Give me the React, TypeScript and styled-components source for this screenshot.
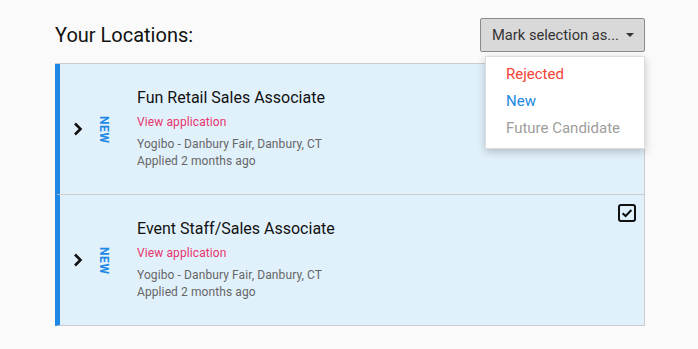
import * as React from 'react';
import styled, { createGlobalStyle } from 'styled-components';

const GlobalStyle = createGlobalStyle`
  body {
    margin: 0;
    background: #fafafa;
    font-family: Roboto, "Liberation Sans", Arial, sans-serif;
  }
`;

const Page = styled.div`
  width: 590px;
  padding: 18px 0 0 55px;
`;

const Header = styled.div`
  display: flex;
  justify-content: space-between;
  align-items: center;
  height: 34px;
  margin-bottom: 11px;
  position: relative;
`;

const Title = styled.h1`
  margin: 0;
  font-size: 20px;
  font-weight: 400;
  color: #111;
`;

const MarkButton = styled.button`
  display: flex;
  align-items: center;
  gap: 7px;
  height: 34px;
  padding: 0 10px 0 11px;
  background: #d9d9d9;
  border: 1px solid #8a8a8a;
  border-radius: 2px;
  font-family: inherit;
  font-size: 14.7px;
  color: #333;
`;

const Caret = styled.span`
  width: 0;
  height: 0;
  border-left: 4.5px solid transparent;
  border-right: 4.5px solid transparent;
  border-top: 4.5px solid #333;
`;

const Menu = styled.ul`
  position: absolute;
  top: 38px;
  right: 0;
  width: 158px;
  margin: 0;
  padding: 4px 0 6px;
  list-style: none;
  background: #fff;
  border: 1px solid #ddd;
  box-shadow: 0 3px 8px rgba(0, 0, 0, 0.22);
  z-index: 2;
`;

const MenuItem = styled.li<{ $color: string }>`
  height: 27px;
  line-height: 27px;
  padding-left: 20px;
  font-size: 15px;
  color: ${p => p.$color};
`;

const List = styled.div`
  border-top: 1px solid #ccc;
`;

const Card = styled.div`
  position: relative;
  display: flex;
  align-items: center;
  height: 130px;
  background: #e1f1fc;
  border-left: 5px solid #1e88e5;
  border-right: 1px solid #ccc;
  border-bottom: 1px solid #ccc;
`;

const Toggle = styled.div`
  display: flex;
  justify-content: center;
  width: 34px;
  margin-left: 1px;
`;

const Badge = styled.div`
  display: flex;
  justify-content: center;
  width: 16px;
  margin: 2px 26px 0 0;
  writing-mode: vertical-rl;
  font-size: 12px;
  font-weight: 700;
  letter-spacing: 0.6px;
  color: #1e88e5;
`;

const Body = styled.div`
  display: flex;
  flex-direction: column;
`;

const JobTitle = styled.div`
  font-size: 16px;
  line-height: 20px;
  color: #111;
  margin-bottom: 6px;
`;

const ViewLink = styled.a`
  font-size: 12px;
  line-height: 16px;
  letter-spacing: 0.1px;
  color: #e8336e;
  margin-bottom: 6px;
`;

const Meta = styled.div`
  font-size: 12px;
  line-height: 17px;
  letter-spacing: 0.1px;
  color: #666;
`;

const Check = styled.div`
  position: absolute;
  top: 9px;
  right: 8px;
`;

function Chevron() {
  return (
    <svg width="10" height="14" viewBox="0 0 10 14">
      <path d="M2 1.5 L7.5 7 L2 12.5" fill="none" stroke="#111" strokeWidth="2.6" />
    </svg>
  );
}

function CheckBox() {
  return (
    <svg width="18" height="18" viewBox="0 0 18 18">
      <rect x="1" y="1" width="16" height="16" rx="2" fill="none" stroke="#111" strokeWidth="2" />
      <path d="M4.6 9.2 L7.6 12 L13.4 6" fill="none" stroke="#111" strokeWidth="2" />
    </svg>
  );
}

const applications = [
  { title: 'Fun Retail Sales Associate', checked: false },
  { title: 'Event Staff/Sales Associate', checked: true },
];

function App() {
  return (
    <Page>
      <GlobalStyle />
      <Header>
        <Title>Your Locations:</Title>
        <MarkButton>
          Mark selection as...
          <Caret />
        </MarkButton>
        <Menu>
          <MenuItem $color="#f44336">Rejected</MenuItem>
          <MenuItem $color="#1e88e5">New</MenuItem>
          <MenuItem $color="#9e9e9e">Future Candidate</MenuItem>
        </Menu>
      </Header>
      <List>
        {applications.map(app => (
          <Card key={app.title}>
            <Toggle><Chevron /></Toggle>
            <Badge>NEW</Badge>
            <Body>
              <JobTitle>{app.title}</JobTitle>
              <ViewLink>View application</ViewLink>
              <Meta>Yogibo - Danbury Fair, Danbury, CT</Meta>
              <Meta>Applied 2 months ago</Meta>
            </Body>
            {app.checked && <Check><CheckBox /></Check>}
          </Card>
        ))}
      </List>
    </Page>
  );
}

export default App;
